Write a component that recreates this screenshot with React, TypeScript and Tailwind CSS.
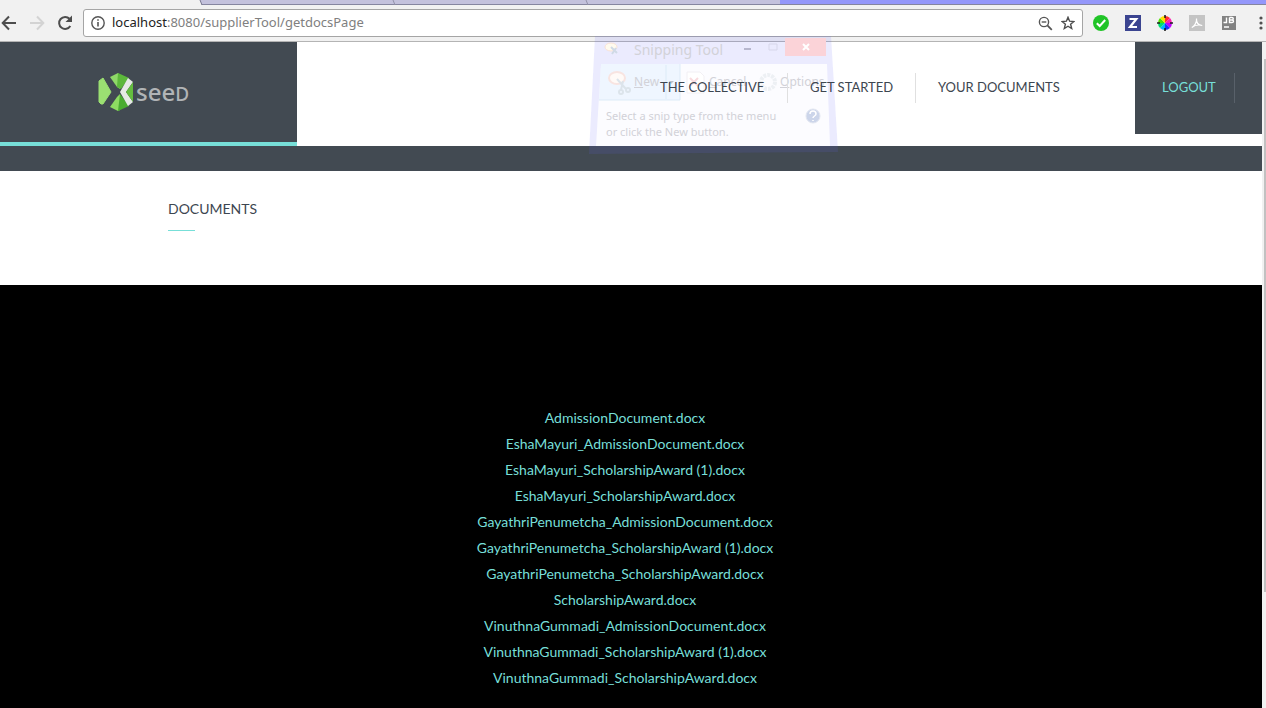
import React from "react";

const documents = [
  "AdmissionDocument.docx",
  "EshaMayuri_AdmissionDocument.docx",
  "EshaMayuri_ScholarshipAward (1).docx",
  "EshaMayuri_ScholarshipAward.docx",
  "GayathriPenumetcha_AdmissionDocument.docx",
  "GayathriPenumetcha_ScholarshipAward (1).docx",
  "GayathriPenumetcha_ScholarshipAward.docx",
  "ScholarshipAward.docx",
  "VinuthnaGummadi_AdmissionDocument.docx",
  "VinuthnaGummadi_ScholarshipAward (1).docx",
  "VinuthnaGummadi_ScholarshipAward.docx",
];

function TabStrip() {
  return (
    <div className="flex h-[5px] border-b border-[#85859f] bg-[#c3c1dc]">
      <svg className="h-[5px] w-[206px]" viewBox="0 0 206 5" aria-hidden="true">
        <path d="M0 0H200L202 5H0Z" fill="#f1f1f1" />
        <path d="M200 0L202 5" stroke="#77778f" />
      </svg>
      <div className="flex flex-1">
        <svg className="h-[5px] w-[574px]" viewBox="0 0 574 5" aria-hidden="true">
          <path d="M187 0L189 5M380 0L382 5" stroke="#9291a9" />
        </svg>
        <div className="flex-1 bg-[#9497fa]" />
      </div>
    </div>
  );
}

function BrowserBar() {
  return (
    <div className="bg-[#f1f1f1]">
      <TabStrip />
      <div className="flex h-[37px] items-center border-b border-[#b4b4b4]">
        <button aria-label="Back" className="flex w-[28px] shrink-0">
          <svg width="18" height="18" viewBox="0 0 18 18" fill="none" stroke="#4d4d4d" strokeWidth="2">
            <path d="M16 9H3M9 2.500L2.700 9L9 15.500" />
          </svg>
        </button>
        <button aria-label="Forward" className="flex w-[28px] shrink-0">
          <svg width="18" height="18" viewBox="0 0 18 18" fill="none" stroke="#d3d3d3" strokeWidth="2">
            <path d="M2 9H15M9 2.500L15.300 9L9 15.500" />
          </svg>
        </button>
        <button aria-label="Reload" className="flex w-[27px] shrink-0">
          <svg width="18" height="18" viewBox="0 0 18 18" fill="none">
            <path d="M14.300 12A6 6 0 1 1 13.500 4.800" stroke="#4d4d4d" strokeWidth="2" />
            <path d="M16 1.500V8H9.500Z" fill="#4d4d4d" />
          </svg>
        </button>
        <div className="flex h-7 min-w-0 flex-1 items-center rounded-[3px] border border-[#a5a5a5] bg-white px-[7px]">
          <svg className="shrink-0" width="14" height="14" viewBox="0 0 14 14" fill="none" stroke="#555555">
            <circle cx="7" cy="7" r="6.200" strokeWidth="1.400" />
            <path d="M7 6V10.500M7 3.300V4.800" strokeWidth="1.600" />
          </svg>
          <div className="ml-[7px] flex-1 whitespace-nowrap font-['Noto_Sans',sans-serif] text-[13px] text-[#808080]">
            <span className="text-[#222222]">localhost</span>:8080/supplierTool/getdocsPage
          </div>
          <button aria-label="Zoom" className="mr-2">
            <svg width="15" height="15" viewBox="0 0 15 15" fill="none" stroke="#555555" strokeWidth="1.400">
              <circle cx="6" cy="6" r="4.600" />
              <path d="M9.400 9.400L13.800 13.800" strokeWidth="1.800" />
              <path d="M3.700 6H8.300" />
            </svg>
          </button>
          <button aria-label="Bookmark">
            <svg width="14" height="14" viewBox="0 0 14 14" fill="none" stroke="#4d4d4d" strokeWidth="1.400">
              <path d="M7 1.300L8.600 5.200L12.900 5.500L9.600 8.200L10.700 12.500L7 10.200L3.300 12.500L4.400 8.200L1.100 5.500L5.400 5.200Z" />
            </svg>
          </button>
        </div>
        <div className="ml-[10px] flex shrink-0 items-center gap-4">
          <svg width="16" height="16" viewBox="0 0 16 16">
            <circle cx="8" cy="8" r="8" fill="#20c427" />
            <path d="M3.800 8.200L6.700 11L12.200 5" fill="none" stroke="white" strokeWidth="2" />
          </svg>
          <svg width="16" height="16" viewBox="0 0 16 16">
            <path d="M0 0H16V16H0Z" fill="#3b4490" />
            <path d="M4.500 4H11.300L5 12H12" fill="none" stroke="white" strokeWidth="2.200" />
          </svg>
          <svg width="16" height="16" viewBox="0 0 16 16">
            <path d="M8 8V1A7 7 0 0 1 13 3Z" fill="#ff3030" />
            <path d="M8 8L13 3A7 7 0 0 1 15 8Z" fill="#ff20b0" />
            <path d="M8 8H15A7 7 0 0 1 13 13Z" fill="#c000ff" />
            <path d="M8 8L13 13A7 7 0 0 1 8 15Z" fill="#2030ff" />
            <path d="M8 8V15A7 7 0 0 1 3 13Z" fill="#00b8ff" />
            <path d="M8 8L3 13A7 7 0 0 1 1 8Z" fill="#00e070" />
            <path d="M8 8H1A7 7 0 0 1 3 3Z" fill="#50e000" />
            <path d="M8 8L3 3A7 7 0 0 1 8 1Z" fill="#ffe000" />
            <path d="M8 0V3M8 13V16M0 8H3M13 8H16" stroke="#202020" strokeWidth="1.600" />
          </svg>
          <svg width="16" height="16" viewBox="0 0 16 16">
            <path d="M0 0H16V16H0Z" fill="#c4c4c4" />
            <path d="M2.800 12.500C5 11.500 8.200 7.500 7.500 3.500C7.200 7.500 9.500 10.200 13.200 10.500C9.500 9.500 6 10 2.800 12.500Z" fill="none" stroke="white" strokeWidth="1.200" />
          </svg>
          <svg width="16" height="16" viewBox="0 0 16 16">
            <path d="M1 1H15V15H1Z" fill="#828282" />
            <path d="M2.500 7.500H5.500V2.500M8.500 2.500V7.500H11C13 7.500 13 5 11 5H8.500H11C12.700 5 12.700 2.500 11 2.500H8.500M3 12H8" fill="none" stroke="white" strokeWidth="1.400" />
          </svg>
          <svg width="13" height="16" viewBox="0 0 13 16" fill="#505050">
            <circle cx="8" cy="3" r="1.600" />
            <circle cx="8" cy="8" r="1.600" />
            <circle cx="8" cy="13" r="1.600" />
          </svg>
        </div>
      </div>
    </div>
  );
}

function Logo() {
  return (
    <a href="#home" className="flex items-center gap-[3px] font-['Noto_Sans',sans-serif] text-2xl font-medium leading-none text-[#b1b4b6]">
      <svg width="35" height="38" viewBox="0 0 35 38" aria-hidden="true">
        <path d="M1 8L5 5L13 19L5 31L3 31L1 29Z" fill="#9be072" stroke="#9be072" strokeLinejoin="round" />
        <path d="M12 4L20 0L22 2V16L19 14Z" fill="#8fd968" />
        <path d="M20 0L31 5L23 16L19 14Z" fill="#5cb83b" />
        <path d="M12 34L19 24L22 21V37L20 38Z" fill="#8edc62" />
        <path d="M20 38L22 21L31 33Z" fill="#4aac31" />
        <path d="M30 5L35 9L28 19L35 29L30 33L22 19Z" fill="#e5eae5" />
        <path d="M35 9V29L28 19Z" fill="#64bd3f" />
      </svg>
      <span>
        see<span className="text-[19px]">D</span>
      </span>
    </a>
  );
}

function SnippingGhost() {
  return (
    <div aria-hidden="true" className="pointer-events-none absolute left-[589px] top-9 h-[118px] w-[249px] font-['Noto_Sans',sans-serif] text-[#d2d2d8]">
      <svg className="absolute inset-0" width="249" height="118" viewBox="0 0 249 118">
        <path d="M6 0H242L249 116L0 118Z" fill="#6868f4" fillOpacity=".13" />
        <path d="M12 28H238L241 110H7Z" fill="white" fillOpacity=".85" />
        <path d="M12 28H91V64H10Z" fill="#e2efff" fillOpacity=".5" />
        <path d="M10 64H91V28M77 29V63" fill="none" stroke="#dcebf7" />
        <path d="M196 2H237V20H196Z" fill="#fbd3d8" />
        <path d="M214 8L220 14M220 8L214 14" stroke="white" strokeWidth="2" />
        <path d="M155 13H162" stroke="#b7b7ce" strokeWidth="2" />
        <path d="M180 8H188V14H180Z" fill="none" stroke="#d7d7ea" />
        <ellipse cx="22" cy="11" rx="6" ry="4" fill="#fffbee" stroke="#f9e2d6" />
        <path d="M22 11L28 17M27 12L23 18" stroke="#d0dae6" strokeWidth="2" />
        <ellipse cx="28" cy="42" rx="8" ry="6" fill="#fffaf7" stroke="#f8e4e1" strokeWidth="2" />
        <path d="M28 43L37 53M34 45L32 54" stroke="#dce4eb" strokeWidth="2" />
        <circle cx="32" cy="56" r="2" fill="none" stroke="#dce4eb" strokeWidth="2" />
        <circle cx="39" cy="54" r="2" fill="none" stroke="#dce4eb" strokeWidth="2" />
        <path d="M80 45H85L82 48Z" fill="#b9c0ca" />
        <path d="M98 36H111L115 40V57H98Z" fill="white" stroke="#f2f0f4" />
        <path d="M101 42L109 50M109 42L101 50" stroke="#f8dbdf" strokeWidth="2" />
        <circle cx="179" cy="46" r="7" fill="none" stroke="#edf0f4" strokeWidth="4" strokeDasharray="3 1" />
        <circle cx="224" cy="80" r="7" fill="#ccd5ea" stroke="#e2e6f1" />
        <path d="M221 78C221 74 227 74 227 78C227 80 224 80 224 82M224 84V85" fill="none" stroke="white" strokeWidth="1.500" />
      </svg>
      <div className="relative flex flex-col">
        <div className="h-7 pl-[45px] pt-1 text-sm leading-5">Snipping Tool</div>
        <div className="flex h-9 items-center pl-[45px] text-xs">
          <span className="w-[75px]"><u>N</u>ew</span>
          <span className="w-[71px]"><u>C</u>ancel</span>
          <span><u>O</u>ptions</span>
        </div>
        <div className="pl-[17px] pt-2 text-[11px] leading-4">
          Select a snip type from the menu
          <br />
          or click the New button.
        </div>
      </div>
    </div>
  );
}

function SiteHeader() {
  return (
    <header className="flex h-[104px] items-start justify-between font-['Lato',sans-serif] text-[13px] text-[#3d4650]">
      <div className="flex h-full w-[297px] items-center border-b-4 border-[#77dfd8] bg-[#424a52] pl-[98px]">
        <Logo />
      </div>
      <nav className="relative z-10 flex h-[92px] items-center whitespace-nowrap">
        <a href="#collective" className="flex h-[30px] w-[128px] items-center border-r border-[#e0e0e0]">THE COLLECTIVE</a>
        <a href="#start" className="flex h-[30px] w-[128px] items-center border-r border-[#e0e0e0] pl-[22px]">GET STARTED</a>
        <a href="#documents" className="flex h-[30px] w-[219px] items-center pl-[22px]">YOUR DOCUMENTS</a>
        <div className="flex h-full w-[127px] items-center bg-[#424a52] pl-[27px]">
          <a href="#logout" className="flex h-[30px] w-[73px] items-center border-r border-[#59616a] text-[#77dfd8]">LOGOUT</a>
        </div>
      </nav>
    </header>
  );
}

export default function App() {
  return (
    <div className="relative flex min-h-screen flex-col bg-white">
      <BrowserBar />
      <div className="flex flex-1">
        <div className="flex min-w-0 flex-1 flex-col">
          <SiteHeader />
          <div className="h-[25px] bg-[#424a52]" />
          <section className="h-[114px] pl-[168px] pt-7 font-['Lato',sans-serif] text-[#3d4650]">
            <h1 className="text-sm leading-5">DOCUMENTS</h1>
            <div className="mt-[11px] h-px w-[27px] bg-[#77dfd8]" />
          </section>
          <main className="flex-1 bg-black pr-3 pt-[120px] font-['Lato',sans-serif]">
            <ul className="text-center text-sm leading-[26px] text-[#77dfd8]">
              {documents.map((name) => (
                <li key={name}>
                  <a href="#document">{name}</a>
                </li>
              ))}
            </ul>
          </main>
        </div>
        <div className="w-1 bg-[#f1f1f1] pl-0.5 pt-[17px]">
          <div className="h-[533px] bg-[#c1c1c1]" />
        </div>
      </div>
      <SnippingGhost />
    </div>
  );
}
